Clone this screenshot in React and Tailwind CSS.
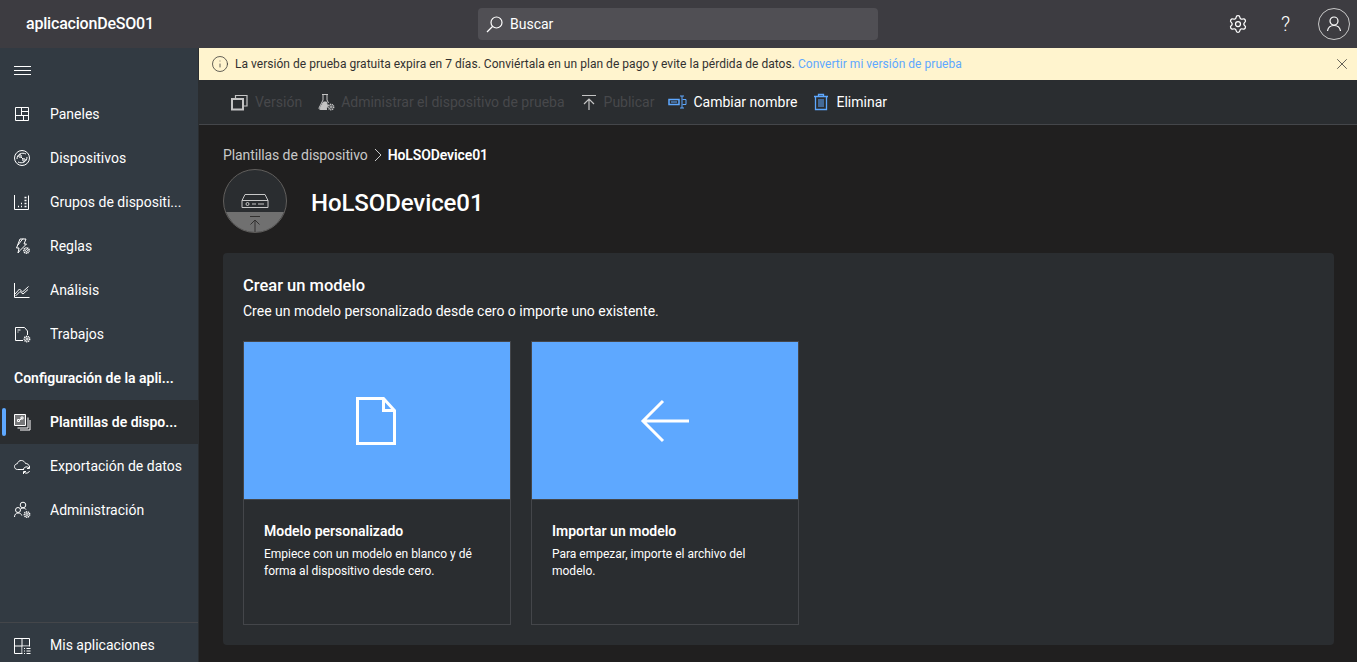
import { Settings, X, Info } from "lucide-react";

const S = ({ children, size = 20, className = "", vb = 20 }) => (
  <svg width={size} height={size} viewBox={`0 0 ${vb} ${vb}`} fill="none" stroke="currentColor" strokeWidth="1" className={className}>
    {children}
  </svg>
);

const Gear = ({ cx, cy, bg = "#323a42" }) => (
  <g>
    <circle cx={cx} cy={cy} r="2.6" fill={bg} strokeDasharray="1.2 0.6" strokeWidth="1.6" />
    <circle cx={cx} cy={cy} r="1" />
  </g>
);

const icons = {
  paneles: <S><path d="M3.500 3.500h13v13h-13z M9.500 3.500v8 M3.500 11.500h13 M9.500 7.500h7 M11.500 11.500v5" /></S>,
  dispositivos: <S><circle cx="10" cy="10" r="7.500" /><path d="M5 11c0-5 5-7 9-5 M15 9c0 5-5 7-9 5" /><circle cx="8" cy="8" r="1.300" /><circle cx="12" cy="12" r="1.300" /><path d="M9 9l2 2" /></S>,
  grupos: <S><path d="M2.500 3v14.500h14V3.500" /><path d="M6 14.500h1 M9 14.500h1 M12.500 14.500h2 M9 11.500h1 M12.500 11.500h2 M12.500 8.500h2 M12.500 5.500h2" strokeWidth="1.500" /></S>,
  reglas: <S><path d="M8 3h6l-2 5h2.500L8 14.500 6 17l1-5H4.500z M11 2.500L6 9" /><Gear cx={14.500} cy={14.500} /></S>,
  analisis: <S><path d="M2.500 3v14.500h15" /><path d="M3 14l4.500-5 3 3 6-5.500 M3.500 16l4.500-4.500 3 2.500 5-4.500" /></S>,
  trabajos: <S><path d="M3.500 16.500V3.500h9l3 3.500v4 M3.500 16.500h7.500" /><path d="M5.500 6h3 M5.500 8h1" /><Gear cx={15} cy={15} /></S>,
  plantillas: <S><path d="M2.500 2.500h11v11h-11z" fill="#77787a" /><path d="M16 5.500v10.500H5.500 M18 8v10H8" /><path d="M6 10l4-4 M5.500 7.500h2v2h-2z M9 5h2v2H9z" /></S>,
  exportacion: <S><path d="M12 13.500H5.500C3.500 13.500 2.500 12 2.500 10.500S3.800 7.800 5.300 7.700C6 5.500 7.500 4.500 9.300 4.500c2 0 3.500 1.300 4.200 3 1.700 0 3.500.8 3.800 3" /><path d="M11.500 13a3.200 3.200 0 0 1 5.500-1 M17.500 15a3.200 3.200 0 0 1-5.500 1" /><path d="M17.500 10v2.500H15 M11.500 18v-2.500H14" /></S>,
  admin: <S><circle cx="11" cy="5" r="2.800" /><circle cx="6" cy="10" r="2.500" /><path d="M2.500 17c0-2.500 1.500-4 3.500-4s3.500 1 3.800 2.500 M9 8.500c.8-.4 1.500-.5 2-.5 1.500 0 2.500.7 3 1.500" /><Gear cx={15} cy={14.500} /></S>,
  apps: <S><path d="M2.500 2.500h15v15h-15z" /><path d="M10 2.500v15 M2.500 10h15" strokeWidth="1" /><path d="M10.500 10.500h9v9h-9z" fill="#323a42" stroke="none" /><path d="M12 12.500h1 M14.500 12.500h4 M12 15h1 M14.500 15h4 M12 17.500h1 M14.500 17.500h4" /></S>,
};

const navTop = [
  ["paneles", "Paneles"],
  ["dispositivos", "Dispositivos"],
  ["grupos", "Grupos de dispositi..."],
  ["reglas", "Reglas"],
  ["analisis", "Análisis"],
  ["trabajos", "Trabajos"],
];

function NavRow({ icon, label, active }) {
  return (
    <div className={`relative flex h-11 items-center pl-3 ${active ? "bg-[#2a2d30] font-semibold" : ""}`}>
      {active && <span className="absolute left-[2px] top-2 bottom-2 w-1 rounded-sm bg-[#5ea8ff]" />}
      <span className="w-[38px] flex items-center">{icons[icon]}</span>
      <span className="truncate">{label}</span>
    </div>
  );
}

function ToolbarItem({ icon, label, disabled }) {
  return (
    <div className={`flex items-center gap-[5px] ${disabled ? "text-[#47484b]" : "text-white"}`}>
      {icon}
      <span>{label}</span>
    </div>
  );
}

function Tile({ icon, title, text }) {
  return (
    <div className="w-[268px] h-[284px] border border-[#44464a] bg-[#2a2d30]">
      <div className="h-[157px] bg-[#5ea8ff] flex items-center justify-center text-white">{icon}</div>
      <div className="border-t border-[#44464a] px-5 pt-[21px]">
        <p className="text-[14px] font-semibold text-white leading-5">{title}</p>
        <p className="mt-[5px] text-[12px] leading-[17px] text-white">{text}</p>
      </div>
    </div>
  );
}

export default function App() {
  return (
    <div className="h-[662px] w-[1357px] overflow-hidden flex flex-col bg-[#201f1f] text-white text-[14px] font-['Roboto','Liberation_Sans',sans-serif]">
      {/* top bar */}
      <header className="relative h-12 shrink-0 bg-[#3d3c41] flex items-center">
        <span className="pl-[26px] w-[478px] text-[16px] font-medium tracking-[-0.2px]">aplicacionDeSO01</span>
        <div className="w-[400px] h-8 rounded-sm bg-[#504f54] flex items-center pl-2 gap-[7px]">
          <svg width="17" height="17" viewBox="0 0 17 17" fill="none" stroke="currentColor" strokeWidth="1.200">
            <circle cx="10.500" cy="6.500" r="5.500" />
            <path d="M6.500 10.500 1 16" />
          </svg>
          <span>Buscar</span>
        </div>
        <div className="ml-auto flex items-center pr-[7px]">
          <Settings size={20} strokeWidth={1.500} className="-translate-x-px" />
          <span className="ml-[26px] mr-[-2px] w-[21px] text-center text-[20px] font-light leading-none">?</span>
          <div className="ml-[24px] h-8 w-8 rounded-full border border-[#c8c8c8] flex items-center justify-center">
            <svg width="18" height="18" viewBox="0 0 18 18" fill="none" stroke="currentColor" strokeWidth="1.200">
              <circle cx="9" cy="6" r="4" />
              <path d="M2.500 16c.5-3.500 3-5.500 6.500-5.500s6 2 6.500 5.500" />
            </svg>
          </div>
        </div>
      </header>

      <div className="flex flex-1 min-h-0">
        {/* sidebar */}
        <aside className="w-[199px] shrink-0 bg-[#323a42] flex flex-col border-r border-[#2a2d30]">
          <div className="h-11 flex items-center pl-[14px]">
            <svg width="17" height="10" viewBox="0 0 17 10" stroke="white" strokeWidth="1" className="mt-[2px]"><path d="M0 .5h17 M0 4.500h17 M0 8.500h17" /></svg>
          </div>
          {navTop.map(([icon, label]) => <NavRow key={icon} icon={icon} label={label} />)}
          <div className="h-11 flex items-center pl-[14px] font-semibold">Configuración de la apli...</div>
          <NavRow icon="plantillas" label="Plantillas de dispo..." active />
          <NavRow icon="exportacion" label="Exportación de datos" />
          <NavRow icon="admin" label="Administración" />
          <div className="mt-auto border-t border-[#44464a]">
            <div className="flex h-[39px] items-center pl-3 pt-[6px]">
              <span className="w-[38px] flex items-center">{icons.apps}</span>
              <span>Mis aplicaciones</span>
            </div>
          </div>
        </aside>

        <main className="flex-1 min-w-0 flex flex-col">
          {/* trial banner */}
          <div className="h-8 shrink-0 bg-[#fff4ce] text-[#323130] text-[12px] tracking-[0.03px] flex items-center pl-3 pr-[6px]">
            <Info size={18} strokeWidth={1} className="mr-[6px]" />
            <span>La versión de prueba gratuita expira en 7 días. Conviértala en un plan de pago y evite la pérdida de datos.</span>
            <span className="ml-[3px] text-[#5ea8ff]">Convertir mi versión de prueba</span>
            <X size={18} strokeWidth={1} className="ml-auto" />
          </div>

          {/* command bar */}
          <div className="h-[45px] shrink-0 bg-[#2a2d30] border-b border-[#44464a] flex items-center pl-[31px] gap-[14px]">
            <ToolbarItem disabled label="Versión" icon={
              <S className="text-[#c4c4c4]"><path d="M2 7h11v10.500H2z" strokeWidth="2" /><path d="M5.500 6V3.500h11.500V14h-3" strokeWidth="1.200" /></S>
            } />
            <ToolbarItem disabled label="Administrar el dispositivo de prueba" icon={
              <S className="text-[#c4c4c4]"><path d="M6 2.500h6 M7 3v5l-4 8c0 1 .5 1.500 1.500 1.500H11" /><path d="M11 3v5l1.500 3" /><path d="M4 16l3.500-6h3l1 4-1.500 3.500H4.500z" fill="currentColor" /><Gear cx={15} cy={15} bg="#2a2d30" /></S>
            } />
            <ToolbarItem disabled label="Publicar" icon={
              <S className="text-[#c4c4c4]"><path d="M3 3.500h14 M10 18V7 M5 12l5-5 5 5" strokeWidth="1.200" /></S>
            } />
            <ToolbarItem label="Cambiar nombre" icon={
              <S className="text-[#5ea8ff]"><path d="M1 7.500h10v5H1z" strokeWidth="1.500" /><path d="M3 10h6" /><path d="M12 4h4 M12 16h4 M14 4v12 M14.500 7.500H18v5h-3.500" /></S>
            } />
            <ToolbarItem label="Eliminar" icon={
              <S className="text-[#5ea8ff]"><path d="M3 4.500h14 M7.500 4V2.500h5V4 M4.500 4.500v13h11v-13" strokeWidth="1.300" /><path d="M8 7v8 M10 7v8 M12 7v8" /></S>
            } />
          </div>

          {/* page */}
          <div className="flex-1 min-h-0 pl-6 pr-[23px] pt-5">
            <div className="flex items-center text-[#c8c8c8] leading-5 h-5 tracking-[-0.1px]">
              <span>Plantillas de dispositivo</span>
              <svg width="8" height="14" viewBox="0 0 8 14" fill="none" stroke="#c8c8c8" strokeWidth="1" className="ml-[6px] mr-[6px]"><path d="M1 1l6 6-6 6" /></svg>
              <span className="text-white font-semibold">HoLSODevice01</span>
            </div>
            <div className="mt-[4px] flex items-center h-[64px]">
              <div className="w-16 h-16 rounded-full border border-[#605e5c] overflow-hidden bg-[#2a2d30] flex flex-col">
                <div className="h-[42px] flex items-end justify-center pb-[3px]">
                  <svg width="28" height="16" viewBox="0 0 28 16" fill="none" stroke="#c8c8c8" strokeWidth="1">
                    <path d="M4 1.500h20l3 6v7H1v-7z M1 7.500h26" />
                    <circle cx="6.500" cy="11" r="1.500" />
                    <path d="M11 11h4 M17 11h6" />
                  </svg>
                </div>
                <div className="flex-1 bg-[#707070] flex justify-center pt-[4px]">
                  <svg width="14" height="16" viewBox="0 0 14 16" fill="none" stroke="#323130" strokeWidth="1"><path d="M2 .5h10 M7 16V4 M2.500 8.500 7 4l4.500 4.500" /></svg>
                </div>
              </div>
              <h1 className="ml-6 pt-1 text-[24px] font-medium leading-none tracking-[-0.1px]">HoLSODevice01</h1>
            </div>

            {/* model card */}
            <section className="mt-5 h-[392px] rounded-sm bg-[#2a2d30] px-5 pt-[23px]">
              <h2 className="text-[16.500px] font-medium leading-5">Crear un modelo</h2>
              <p className="mt-[5px] leading-5">Cree un modelo personalizado desde cero o importe uno existente.</p>
              <div className="mt-[20px] flex gap-5">
                <Tile
                  title="Modelo personalizado"
                  text="Empiece con un modelo en blanco y dé forma al dispositivo desde cero."
                  icon={
                    <svg width="40" height="48" viewBox="0 0 40 48" fill="none" stroke="currentColor" strokeWidth="3" className="-translate-x-px">
                      <path d="M1.500 1.500h26L38.500 13.500v33h-37z M27.500 1.500v12h11" />
                    </svg>
                  }
                />
                <Tile
                  title="Importar un modelo"
                  text="Para empezar, importe el archivo del modelo."
                  icon={
                    <svg width="50" height="44" viewBox="0 0 50 44" fill="none" stroke="currentColor" strokeWidth="3">
                      <path d="M49 22H3 M23 2 3 22l20 20" />
                    </svg>
                  }
                />
              </div>
            </section>
          </div>
        </main>
      </div>
    </div>
  );
}
